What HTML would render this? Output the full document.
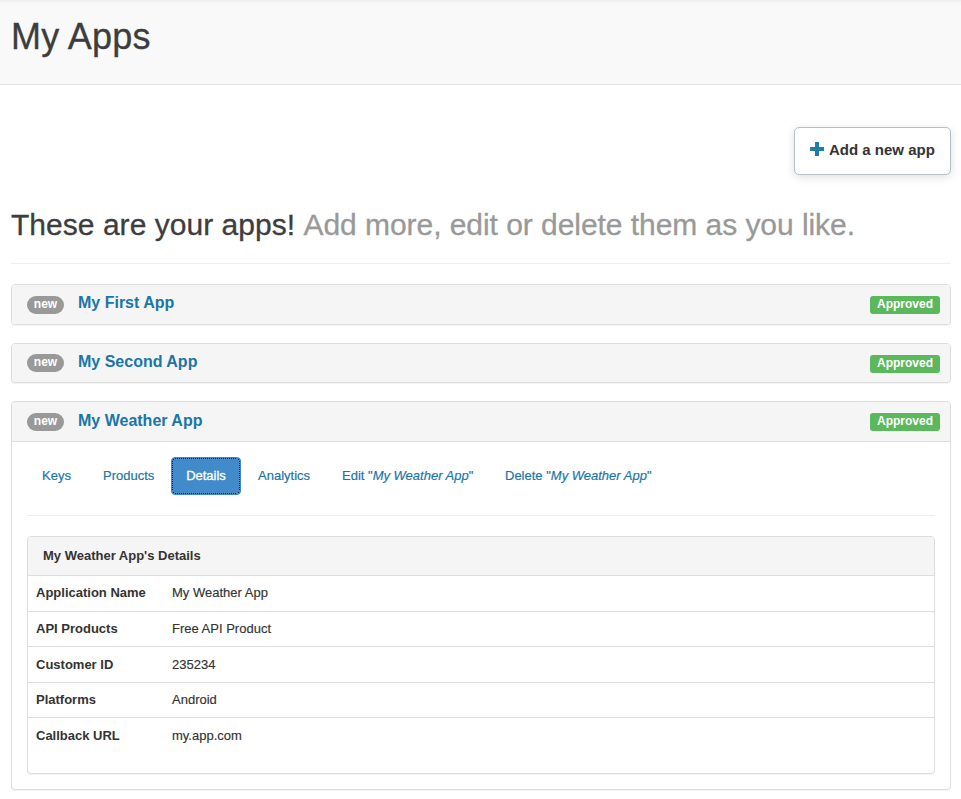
<!DOCTYPE html>
<html lang="en">
<head>
<meta charset="utf-8">
<title>My Apps</title>
<style>
*{box-sizing:border-box}
html,body{margin:0;padding:0}
body{width:961px;height:799px;overflow:hidden;background:#fff;font-family:"Liberation Sans",Arial,Helvetica,sans-serif;font-size:13px;line-height:1.42857;color:#333;position:relative}
a{color:#1a76a8;text-decoration:none}
.hdr{position:absolute;left:0;top:0;width:961px;height:85px;background:linear-gradient(180deg,#ededed 0,#f3f3f3 2px,#f7f7f7 4px,#f9f9f9 6px) #f9f9f9;border-bottom:1px solid #e4e4e4}
.hdr h1{-webkit-text-stroke:.3px;margin:0;position:absolute;left:11px;top:17px;letter-spacing:.25px;font-size:36px;font-weight:normal;line-height:40px;color:#3d3d3d}
.addbtn{position:absolute;left:794px;top:127px;width:157px;height:48px;border:1px solid #b4c0c6;border-radius:5px;background:#fff;box-shadow:0 2px 10px rgba(0,0,0,.13);font-size:15px;font-weight:bold;color:#333;line-height:46px;white-space:nowrap}
.addbtn .plus{position:absolute;left:15px;top:14px;width:14px;height:14px}
.addbtn .plus:before{content:"";position:absolute;left:5px;top:0;width:4px;height:14px;background:#1f7fa8}
.addbtn .plus:after{content:"";position:absolute;left:0;top:5px;width:14px;height:4px;background:#1f7fa8}
.addbtn span.t{position:absolute;left:34px;top:-1px}
h2.lead{-webkit-text-stroke:.3px;letter-spacing:.03px;margin:0;position:absolute;left:11px;top:205px;font-size:30px;font-weight:normal;line-height:40px;color:#3d3d3d;white-space:nowrap}
h2.lead small{font-size:30px;color:#999;margin-left:0;letter-spacing:-.05px}
.hr1{position:absolute;left:11px;top:263px;width:940px;height:1px;background:#eee}
.panel{position:absolute;left:11px;width:940px;border:1px solid #ddd;border-radius:4px;background:#fff;box-shadow:0 1px 1px rgba(0,0,0,.05)}
.ph{position:relative;height:39px;background:#f5f5f5;border-radius:3px}
.panel.open .ph{border-bottom:1px solid #ddd;border-radius:3px 3px 0 0;height:40px}
.badge{position:absolute;left:15px;top:11px;width:37px;height:18px;border-radius:9px;background:#999;color:#fff;font-size:12px;font-weight:bold;line-height:17px;text-align:center}
.ttl{position:absolute;left:66px;top:7px;font-size:16px;font-weight:bold;line-height:22px;color:#1a76a8;white-space:nowrap}
.ok{position:absolute;right:10px;top:11px;width:70px;height:18px;border-radius:3px;background:#5cb85c;color:#fff;font-size:12px;font-weight:bold;line-height:16px;text-align:center}
.tabs{position:absolute;left:0;top:0}
.tab{-webkit-text-stroke:.2px;position:absolute;top:55px;height:38px;line-height:36px;font-size:13px;color:#1a76a8;white-space:nowrap;padding:0 14px;border:1px solid transparent;border-radius:4px}
.tab.act{background:#428bca;color:#fff;border:1px solid #3f86c4;width:70px;padding:0;text-align:center;-webkit-text-stroke:.3px}
.tab.act:before{content:"";position:absolute;left:0;top:0;width:68px;height:36px;background:repeating-linear-gradient(90deg,#15222f 0,#15222f 1px,transparent 1px,transparent 2px) 3px 0/62px 1px no-repeat,repeating-linear-gradient(90deg,#15222f 0,#15222f 1px,transparent 1px,transparent 2px) 3px 35px/62px 1px no-repeat,repeating-linear-gradient(180deg,#15222f 0,#15222f 1px,transparent 1px,transparent 2px) 0 3px/1px 30px no-repeat,repeating-linear-gradient(180deg,#15222f 0,#15222f 1px,transparent 1px,transparent 2px) 67px 3px/1px 30px no-repeat,linear-gradient(#15222f,#15222f) 1px 1px/1px 1px no-repeat,linear-gradient(#15222f,#15222f) 66px 1px/1px 1px no-repeat,linear-gradient(#15222f,#15222f) 1px 34px/1px 1px no-repeat,linear-gradient(#15222f,#15222f) 66px 34px/1px 1px no-repeat}
.hr2{position:absolute;left:15px;top:113px;width:908px;height:1px;background:#eee}
.inner{position:absolute;left:15px;top:134px;width:908px;height:238px;border:1px solid #ddd;border-radius:4px;background:#fff;box-shadow:0 1px 1px rgba(0,0,0,.05)}
.ih{height:39px;background:#f5f5f5;border-bottom:1px solid #ddd;border-radius:3px 3px 0 0;font-weight:bold;font-size:13px;line-height:38px;padding-left:15px;color:#333}
.row{position:absolute;left:0;width:906px;height:36px;border-top:1px solid #ddd;line-height:34px}
.row b{position:absolute;left:8px;top:0;color:#333}
.row span{-webkit-text-stroke:.15px;position:absolute;left:144px;top:0;color:#333}
.row.d1 b,.row.d1 span{top:1px}
</style>
</head>
<body>
<div class="hdr"><h1>My Apps</h1></div>
<div class="addbtn"><i class="plus"></i><span class="t">Add a new app</span></div>
<h2 class="lead">These are your apps! <small>Add more, edit or delete them as you like.</small></h2>
<div class="hr1"></div>

<div class="panel" style="top:284px;height:41px">
  <div class="ph"><span class="badge">new</span><a class="ttl">My First App</a><span class="ok">Approved</span></div>
</div>
<div class="panel" style="top:343px;height:40px">
  <div class="ph" style="height:38px"><span class="badge" style="top:10px">new</span><a class="ttl">My Second App</a><span class="ok">Approved</span></div>
</div>
<div class="panel open" style="top:401px;height:389px">
  <div class="ph"><span class="badge">new</span><a class="ttl" style="top:8px">My Weather App</a><span class="ok">Approved</span></div>
  <a class="tab" style="left:15px">Keys</a>
  <a class="tab" style="left:76px">Products</a>
  <a class="tab act" style="left:159px">Details</a>
  <a class="tab" style="left:231px">Analytics</a>
  <a class="tab" style="left:315px">Edit "<i>My Weather App</i>"</a>
  <a class="tab" style="left:478px">Delete "<i>My Weather App</i>"</a>
  <div class="hr2"></div>
  <div class="inner">
    <div class="ih">My Weather App's Details</div>
    <div class="rows">
      <div class="row" style="top:38px;border-top-color:transparent"><b>Application Name</b><span>My Weather App</span></div>
      <div class="row" style="top:74px"><b>API Products</b><span>Free API Product</span></div>
      <div class="row d1" style="top:109px"><b>Customer ID</b><span>235234</span></div>
      <div class="row" style="top:145px"><b>Platforms</b><span>Android</span></div>
      <div class="row d1" style="top:180px"><b>Callback URL</b><span>my.app.com</span></div>
    </div>
  </div>
</div>
</body>
</html>
